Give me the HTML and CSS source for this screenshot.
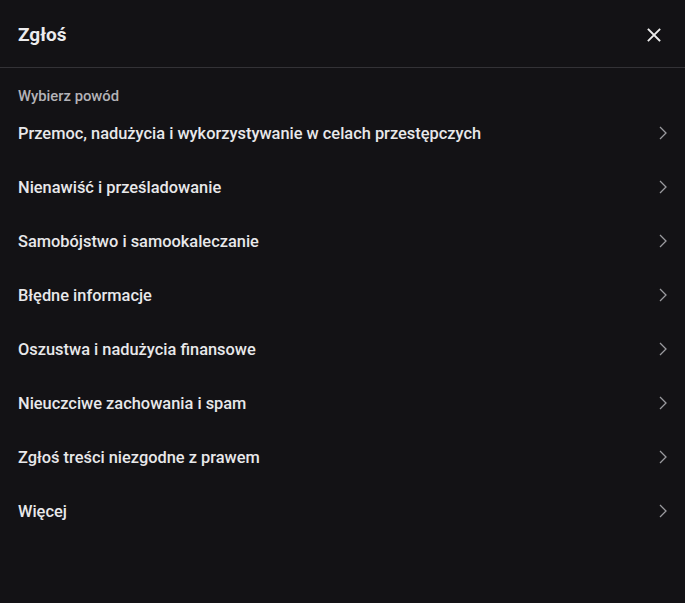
FILE: index.html
```html
<!DOCTYPE html>
<html lang="pl">
<head>
<meta charset="utf-8">
<link rel="stylesheet" href="styles.css">
</head>
<body>
<div class="dialog">
  <header class="head">
    <h1 class="title">Zgłoś</h1>
    <button class="close" aria-label="Zamknij">
      <svg width="14" height="14" viewBox="0 0 14 14"><path d="M1.5 1.5L12.5 12.5M12.5 1.5L1.5 12.5" stroke="#ececec" stroke-width="1.8" stroke-linecap="square" fill="none"/></svg>
    </button>
  </header>
  <div class="body">
    <div class="label">Wybierz powód</div>
    <ul class="list">
      <li class="item"><span>Przemoc, nadużycia i wykorzystywanie w celach przestępczych</span><svg class="chev" width="8" height="14" viewBox="0 0 8 14"><path d="M1 1L7 7L1 13" stroke="#9a9a9e" stroke-width="1.3" fill="none"/></svg></li>
      <li class="item"><span>Nienawiść i prześladowanie</span><svg class="chev" width="8" height="14" viewBox="0 0 8 14"><path d="M1 1L7 7L1 13" stroke="#9a9a9e" stroke-width="1.3" fill="none"/></svg></li>
      <li class="item"><span>Samobójstwo i samookaleczanie</span><svg class="chev" width="8" height="14" viewBox="0 0 8 14"><path d="M1 1L7 7L1 13" stroke="#9a9a9e" stroke-width="1.3" fill="none"/></svg></li>
      <li class="item"><span>Błędne informacje</span><svg class="chev" width="8" height="14" viewBox="0 0 8 14"><path d="M1 1L7 7L1 13" stroke="#9a9a9e" stroke-width="1.3" fill="none"/></svg></li>
      <li class="item"><span>Oszustwa i nadużycia finansowe</span><svg class="chev" width="8" height="14" viewBox="0 0 8 14"><path d="M1 1L7 7L1 13" stroke="#9a9a9e" stroke-width="1.3" fill="none"/></svg></li>
      <li class="item"><span>Nieuczciwe zachowania i spam</span><svg class="chev" width="8" height="14" viewBox="0 0 8 14"><path d="M1 1L7 7L1 13" stroke="#9a9a9e" stroke-width="1.3" fill="none"/></svg></li>
      <li class="item"><span>Zgłoś treści niezgodne z prawem</span><svg class="chev" width="8" height="14" viewBox="0 0 8 14"><path d="M1 1L7 7L1 13" stroke="#9a9a9e" stroke-width="1.3" fill="none"/></svg></li>
      <li class="item"><span>Więcej</span><svg class="chev" width="8" height="14" viewBox="0 0 8 14"><path d="M1 1L7 7L1 13" stroke="#9a9a9e" stroke-width="1.3" fill="none"/></svg></li>
    </ul>
  </div>
</div>
</body>
</html>
```
FILE: styles.css
```css
html, body {
  margin: 0;
  padding: 0;
  background: #131215;
  height: 100%;
}
body {
  font-family: Roboto, "Liberation Sans", Arial, sans-serif;
  color: #e8e8ea;
}
.dialog {
  width: 685px;
  height: 603px;
  background: #131215;
}
.head {
  height: 68px;
  box-sizing: border-box;
  border-bottom: 1px solid #333236;
  display: flex;
  align-items: center;
  justify-content: space-between;
  padding: 2px 18px 0 18px;
}
.title {
  margin: 0;
  font-size: 19px;
  font-weight: 700;
  color: #ececee;
}
.close {
  background: none;
  border: 0;
  padding: 0;
  width: 14px;
  height: 14px;
  margin-right: 6px;
  display: flex;
  cursor: pointer;
}
.body {
  padding: 20px 18px 0 18px;
}
.label {
  font-size: 14.8px;
  font-weight: 500;
  color: #b4b3b8;
  line-height: 16px;
}
.list {
  list-style: none;
  margin: 0;
  padding: 0;
  margin-top: 12px;
}
.item {
  height: 54px;
  display: flex;
  align-items: center;
  justify-content: space-between;
  font-size: 16.4px;
  font-weight: 500;
  color: #e8e8ea;
}
.item:first-child {
  height: 34px;
  margin-bottom: 10px;
}
```
